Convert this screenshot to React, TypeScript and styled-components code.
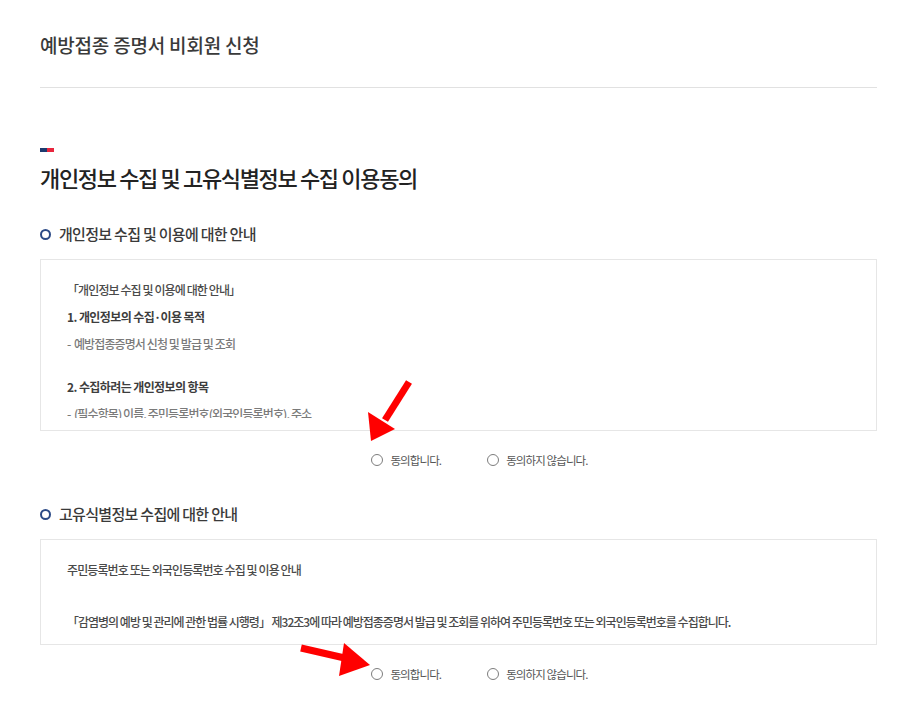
import React from 'react'
import styled, { createGlobalStyle } from 'styled-components'

const GlobalStyle = createGlobalStyle`
  html, body {
    margin: 0;
    padding: 0;
    background: #fff;
  }
  body {
    font-family: 'Noto Sans CJK KR', 'Noto Sans', sans-serif;
    color: #333;
  }
`

type Choice = 'yes' | 'no' | null

const Agree = ({ name }: { name: string }) => {
  const [value, setValue] = React.useState<Choice>(null)
  return (
    <RadioRow>
      <RadioLabel>
        <RadioInput type="radio" name={name} checked={value === 'yes'} onChange={() => setValue('yes')} />
        동의합니다.
      </RadioLabel>
      <RadioLabel>
        <RadioInput type="radio" name={name} checked={value === 'no'} onChange={() => setValue('no')} />
        동의하지 않습니다.
      </RadioLabel>
    </RadioRow>
  )
}

export default function App() {
  return (
    <>
      <GlobalStyle />
      <Page>
        <Header>
          <PageTitle>예방접종 증명서 비회원 신청</PageTitle>
        </Header>

        <Marker />
        <SectionTitle>개인정보 수집 및 고유식별정보 수집 이용동의</SectionTitle>

        <SubTitle>개인정보 수집 및 이용에 대한 안내</SubTitle>
        <TermsBox $height={172}>
          <Scroll>
            <Line>「개인정보 수집 및 이용에 대한 안내」</Line>
            <Line $bold>1. 개인정보의 수집·이용 목적</Line>
            <Line $muted>-&nbsp; 예방접종증명서 신청 및 발급 및 조회</Line>
            <Gap />
            <Line $bold>2. 수집하려는 개인정보의 항목</Line>
            <Line $muted>-&nbsp; (필수항목) 이름, 주민등록번호(외국인등록번호), 주소</Line>
          </Scroll>
        </TermsBox>
        <Agree name="privacy" />

        <SubTitle $top={33}>고유식별정보 수집에 대한 안내</SubTitle>
        <TermsBox $height={106}>
          <Line>주민등록번호 또는 외국인등록번호 수집 및 이용 안내</Line>
          <Gap $size={25} />
          <Line $tight>
            「감염병의 예방 및 관리에 관한 법률 시행령」 제32조3에 따라 예방접종증명서 발급 및 조회를 위하여
            주민등록번호 또는 외국인등록번호를 수집합니다.
          </Line>
        </TermsBox>
        <Agree name="unique" />

        <Annotations width="915" height="715" viewBox="0 0 915 715">
          <g fill="#ff0000">
            <line x1="409" y1="382" x2="385" y2="420" stroke="#ff0000" strokeWidth="7" />
            <polygon points="371,441 368,412 395,429" />
            <line x1="301" y1="648" x2="349" y2="659" stroke="#ff0000" strokeWidth="7" />
            <polygon points="370,665 344,643 339,676" />
          </g>
        </Annotations>
      </Page>
    </>
  )
}

const Page = styled.div`
  position: relative;
  width: 837px;
  padding: 32px 38px 40px 40px;
`

const Header = styled.div`
  padding-bottom: 29px;
  border-bottom: 1px solid #e1e1e1;
`

const PageTitle = styled.h1`
  margin: 0;
  font-size: 19px;
  line-height: 26px;
  font-weight: 500;
  letter-spacing: -0.2px;
  color: #3a3a3a;
`

const Marker = styled.div`
  margin-top: 60px;
  width: 14px;
  height: 4px;
  background: linear-gradient(to right, #1d3a6e 0 50%, #e8263d 50% 100%);
`

const SectionTitle = styled.h2`
  margin: 10px 0 0;
  font-size: 22px;
  line-height: 30px;
  font-weight: 500;
  letter-spacing: -1.35px;
  color: #222;
`

const SubTitle = styled.h3<{ $top?: number }>`
  display: flex;
  align-items: center;
  gap: 8px;
  margin: ${(p) => p.$top ?? 31}px 0 0;
  font-size: 15px;
  line-height: 22px;
  font-weight: 500;
  letter-spacing: -0.7px;
  color: #3a3a3a;

  &::before {
    content: '';
    width: 7px;
    height: 7px;
    border: 2px solid #2b4a86;
    border-radius: 50%;
    flex: none;
  }
`

const TermsBox = styled.div<{ $height: number }>`
  box-sizing: border-box;
  height: ${(p) => p.$height}px;
  margin-top: 14px;
  padding: 16px 26px 12px;
  border: 1px solid #e6e6e6;
  overflow: hidden;
`

const Scroll = styled.div`
  height: 100%;
  overflow: hidden;
`

const Line = styled.p<{ $bold?: boolean; $muted?: boolean; $tight?: boolean }>`
  margin: 0;
  line-height: 27px;
  white-space: nowrap;
  font-size: 12px;
  letter-spacing: ${(p) => (p.$bold ? '-0.6px' : p.$tight ? '-1px' : '-0.9px')};
  font-weight: ${(p) => (p.$bold ? 700 : 500)};
  color: ${(p) => (p.$bold ? '#3d3d3d' : p.$muted ? '#7a7a7a' : '#4a4a4a')};
`

const Gap = styled.div<{ $size?: number }>`
  height: ${(p) => p.$size ?? 16}px;
`

const RadioRow = styled.div`
  display: flex;
  justify-content: center;
  gap: 46px;
  margin-top: 19px;
  padding-left: 42px;
  height: 20px;
`

const RadioLabel = styled.label`
  display: flex;
  align-items: center;
  gap: 7px;
  font-size: 11.5px;
  letter-spacing: -0.9px;
  color: #555;
  cursor: pointer;
`

const RadioInput = styled.input`
  appearance: none;
  margin: 0;
  width: 12px;
  height: 12px;
  border: 1px solid #7d7d7d;
  border-radius: 50%;
  background: #fff;
  cursor: pointer;

  &:checked {
    background: radial-gradient(circle, #2b4a86 0 3px, #fff 3.5px);
    border-color: #2b4a86;
  }
`

const Annotations = styled.svg`
  position: absolute;
  left: 0;
  top: 0;
  pointer-events: none;
`
